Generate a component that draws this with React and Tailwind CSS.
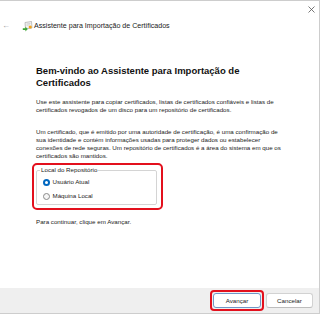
import React from "react";

function CertIcon() {
  return (
    <svg width="11" height="11" viewBox="0 0 11 11">
      <path d="M3 1.5 L9.5 0.5 L10 7 L3.5 8 Z" fill="#f4f4f4" stroke="#9a9a9a" strokeWidth="0.6" />
      <path d="M4.5 3 L8.5 2.4 M4.6 4.3 L8 3.8" stroke="#b5b5b5" strokeWidth="0.5" />
      <circle cx="8.2" cy="6" r="1.6" fill="#f2a31b" />
      <path d="M0.8 7.2 L3.4 7.2 L3.4 5.8 L5.8 8.1 L3.4 10.4 L3.4 9 L0.8 9 Z" fill="#3fa535" />
    </svg>
  );
}

function Radio({ checked, label }) {
  return (
    <div className="h-[14px] flex items-center pl-[6px] gap-[2.5px]">
      {checked ? (
        <span className="w-[7px] h-[7px] rounded-full bg-[#0067c0] flex items-center justify-center">
          <span className="w-[3px] h-[3px] rounded-full bg-white" />
        </span>
      ) : (
        <span className="w-[7px] h-[7px] rounded-full border border-[#8a8a8a] bg-[#f6f6f6]" />
      )}
      <span>{label}</span>
    </div>
  );
}

export default function App() {
  return (
    <div
      className="w-[320px] h-[314px] bg-white border-t border-r border-b border-[#cdcdcd] flex flex-col text-[#1b1b1b]"
      style={{ fontFamily: "'Liberation Sans', Arial, sans-serif" }}
    >
      <div className="h-[16px] flex justify-end items-center pr-[4px]">
        <svg width="7" height="7" viewBox="0 0 7 7">
          <path d="M0.5 0.5 L6.5 6.5 M6.5 0.5 L0.5 6.5" stroke="#555" strokeWidth="0.8" />
        </svg>
      </div>

      <div className="h-[18px] flex items-center text-[7px]">
        <span className="ml-[2px] w-[8px] text-[#9a9a9a] text-[8px] leading-none">←</span>
        <span className="ml-[12px]">
          <CertIcon />
        </span>
        <span className="ml-[1px] text-[#222] text-[7.1px]">Assistente para Importação de Certificados</span>
      </div>

      <div className="pl-[36px] mt-[30px]">
        <h1 className="text-[9.5px] leading-[12px] font-bold text-[#111]">
          Bem-vindo ao Assistente para Importação de
          <br />
          Certificados
        </h1>

        <p className="mt-[9px] text-[6.2px] leading-[8px]">
          Use este assistente para copiar certificados, listas de certificados confiáveis e listas de
          <br />
          certificados revogados de um disco para um repositório de certificados.
        </p>

        <p className="mt-[14px] text-[6.2px] leading-[8px]">
          Um certificado, que é emitido por uma autoridade de certificação, é uma confirmação de
          <br />
          sua identidade e contém informações usadas para proteger dados ou estabelecer
          <br />
          conexões de rede seguras. Um repositório de certificados é a área do sistema em que os
          <br />
          certificados são mantidos.
        </p>
      </div>

      <div className="ml-[32px] mt-[3px] w-[131px] border-2 border-[#e3101d] rounded-[5px] pt-[1px] pl-[2px] pr-[4px] pb-[3px]">
        <fieldset className="border border-[#d4d4d4] rounded-[2px] text-[6.2px] leading-[8px] pb-[1px]">
          <legend className="ml-[3px] px-[1px]">Local do Repositório</legend>
          <div className="mt-[1px]">
            <Radio checked label="Usuário Atual" />
            <Radio label="Máquina Local" />
          </div>
        </fieldset>
      </div>

      <p className="ml-[36px] mt-[8px] text-[6.2px] leading-[8px]">Para continuar, clique em Avançar.</p>

      <div className="flex-1" />

      <div className="h-[25px] bg-[#efefef] flex items-center justify-end pr-[6px] gap-[2px] text-[6.2px]">
        <div className="border-2 border-[#e3101d] rounded-[4px] p-[1px]">
          <button className="w-[48px] h-[15px] bg-white border border-[#6f98c8] rounded-[3px] flex items-center justify-center">
            Avançar
          </button>
        </div>
        <button className="w-[47px] h-[15px] bg-white border border-[#d2d2d2] border-b-[#bdbdbd] rounded-[3px] flex items-center justify-center">
          Cancelar
        </button>
      </div>
    </div>
  );
}
